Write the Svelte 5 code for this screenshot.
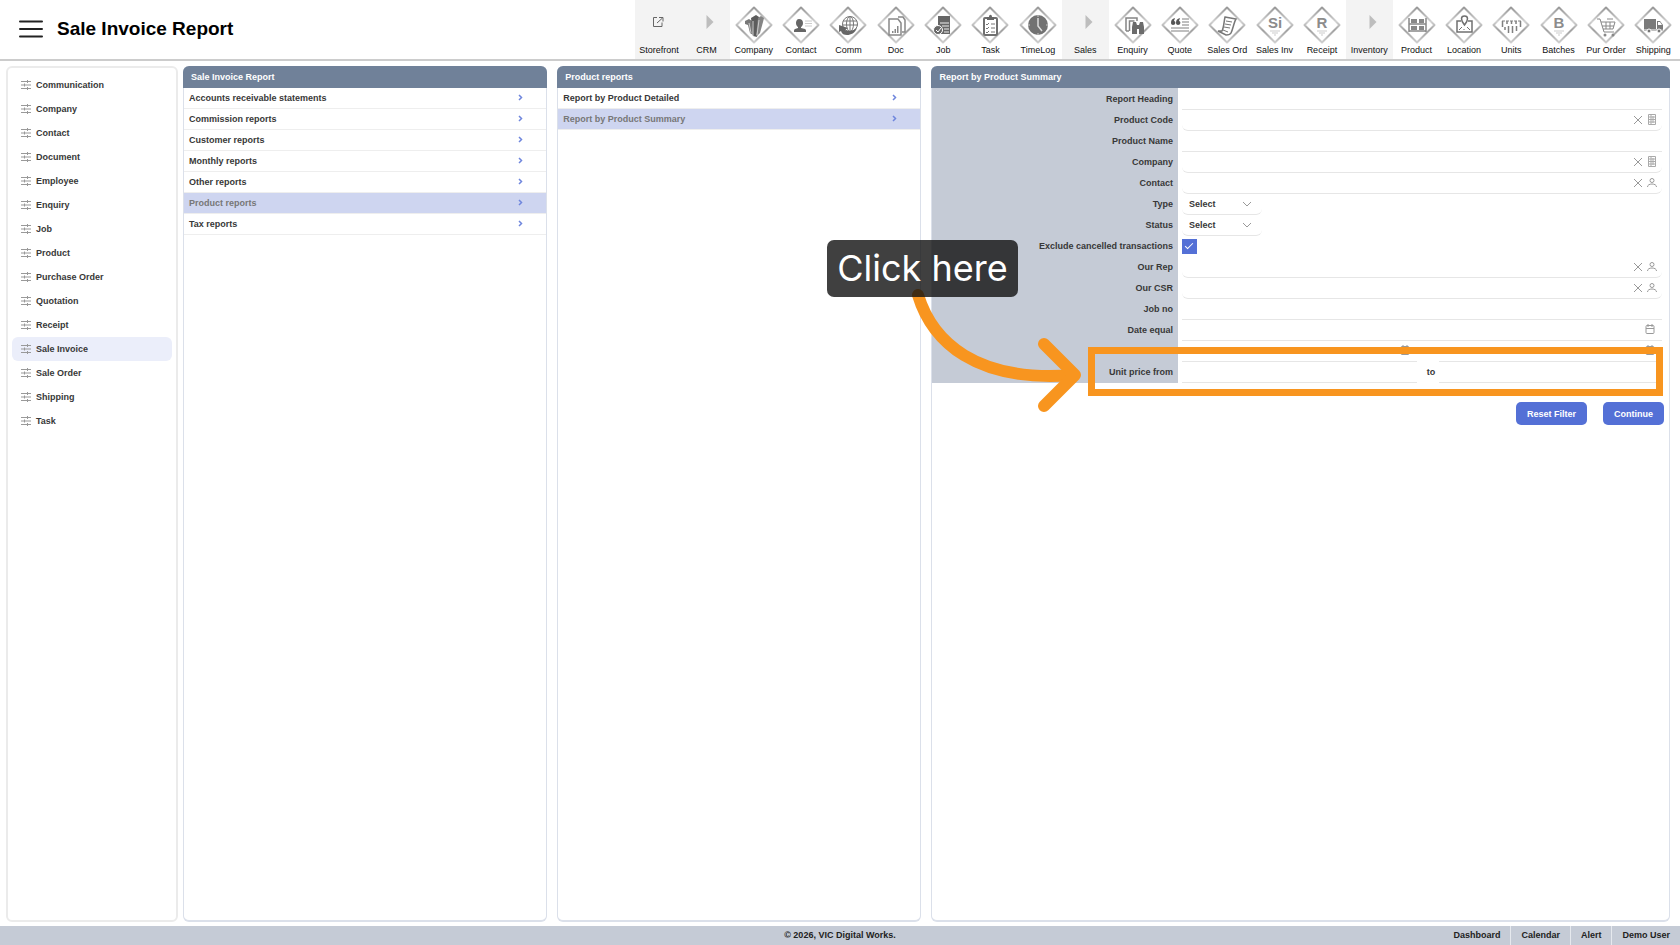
<script lang="ts">
  interface Tool {
    label: string;
    icon: string;
    section?: boolean;
  }

  interface Field {
    id: string;
    label: string;
    kind: 'text' | 'lookup' | 'select' | 'check' | 'date' | 'daterange' | 'range';
    icon?: 'building' | 'person';
  }

  const tools: Tool[] = [
    { label: 'Storefront', icon: 'external', section: true },
    { label: 'CRM', icon: 'arrow', section: true },
    { label: 'Company', icon: 'company' },
    { label: 'Contact', icon: 'contact' },
    { label: 'Comm', icon: 'comm' },
    { label: 'Doc', icon: 'doc' },
    { label: 'Job', icon: 'job' },
    { label: 'Task', icon: 'task' },
    { label: 'TimeLog', icon: 'timelog' },
    { label: 'Sales', icon: 'arrow', section: true },
    { label: 'Enquiry', icon: 'enquiry' },
    { label: 'Quote', icon: 'quote' },
    { label: 'Sales Ord', icon: 'order' },
    { label: 'Sales Inv', icon: 'Si' },
    { label: 'Receipt', icon: 'R' },
    { label: 'Inventory', icon: 'arrow', section: true },
    { label: 'Product', icon: 'product' },
    { label: 'Location', icon: 'location' },
    { label: 'Units', icon: 'units' },
    { label: 'Batches', icon: 'B' },
    { label: 'Pur Order', icon: 'cart' },
    { label: 'Shipping', icon: 'truck' }
  ];

  const modules = [
    'Communication', 'Company', 'Contact', 'Document', 'Employee', 'Enquiry', 'Job', 'Product',
    'Purchase Order', 'Quotation', 'Receipt', 'Sale Invoice', 'Sale Order', 'Shipping', 'Task'
  ];

  const groups = [
    'Accounts receivable statements', 'Commission reports', 'Customer reports',
    'Monthly reports', 'Other reports', 'Product reports', 'Tax reports'
  ];

  const reports = ['Report by Product Detailed', 'Report by Product Summary'];

  const fields: Field[] = [
    { id: 'heading', label: 'Report Heading', kind: 'text' },
    { id: 'code', label: 'Product Code', kind: 'lookup', icon: 'building' },
    { id: 'name', label: 'Product Name', kind: 'text' },
    { id: 'company', label: 'Company', kind: 'lookup', icon: 'building' },
    { id: 'contact', label: 'Contact', kind: 'lookup', icon: 'person' },
    { id: 'type', label: 'Type', kind: 'select' },
    { id: 'status', label: 'Status', kind: 'select' },
    { id: 'exclude', label: 'Exclude cancelled transactions', kind: 'check' },
    { id: 'rep', label: 'Our Rep', kind: 'lookup', icon: 'person' },
    { id: 'csr', label: 'Our CSR', kind: 'lookup', icon: 'person' },
    { id: 'job', label: 'Job no', kind: 'text' },
    { id: 'date', label: 'Date equal', kind: 'date' },
    { id: 'between', label: 'Date between from', kind: 'daterange' },
    { id: 'price', label: 'Unit price from', kind: 'range' }
  ];

  let activeModule = $state('Sale Invoice');
  let activeGroup = $state('Product reports');
  let activeReport = $state('Report by Product Summary');
  let excludeCancelled = $state(true);
</script>

{#snippet glyph(name: string)}
  {#if name === 'company'}
    <path d="M10 15l4-2 3 2 1 14-3-2-2-8-3-1z" fill="#777" />
    <path d="M16 12l5-3 3 2-2 20-4-1z" fill="#5c5c5c" />
    <path d="M23 12l3-2 3 2-1 4-3 11-4 4z" fill="#858585" />
    <path d="M18 15v15M14 17l2 10M24 14l-2 15" stroke="#ccc" fill="none" />
  {:else if name === 'contact'}
    <path d="M17 13c2.500 0 4 1.500 4 4 0 2-1 3.500-2 4v1l4 1c1 .5 1 1 1 3H12c0-2 0-2.500 1-3l3-1v-1c-1-.5-2-2-2-4s1-4 3-4z" fill="#666" />
    <path d="M23 15h7M23 17.500h7M23 20h7" stroke="#ccc" />
  {:else if name === 'comm'}
    <g fill="none" stroke="#777">
      <circle cx="21" cy="18" r="7.500" />
      <ellipse cx="21" cy="18" rx="3.500" ry="7.500" />
      <path d="M14 15h14M13 19h16M21 11v15" />
    </g>
    <path d="M10 19l9 3-3 2c4 2 8 1 12-2-2 5-6 7-10 7-3 0-5-1-6-4l-2 1z" fill="#666" />
  {:else if name === 'doc'}
    <g fill="none" stroke="#888" stroke-width="1.500">
      <path d="M12 13h9l3 4v12H12zM21 11h5l2 3v12h-3" />
    </g>
    <path d="M15 27v-2h1.500v2zM17.500 27v-4H19v4zM20 27v-7h1.500v7z" fill="#888" />
  {:else if name === 'job'}
    <path d="M14 10h12v18H14z" fill="#666" />
    <path d="M16 17h9M18 20h7M20 23h5M20 26h5" stroke="#eee" />
    <circle cx="14" cy="24" r="4.500" fill="#666" stroke="#fff" />
    <path d="M12 24l2 2 3-4" fill="none" stroke="#fff" />
  {:else if name === 'task'}
    <rect x="13" y="12" width="13" height="17" rx="1" fill="none" stroke="#707070" stroke-width="2" />
    <path d="M16 11h2c0-3 3-3 3 0h2v3h-7z" fill="#666" />
    <path d="M15 18l1 1 2-2M15 22l1 1 2-2M15 26l1 1 2-2M20 18h4M20 22h4M20 26h4" fill="none" stroke="#777" />
  {:else if name === 'timelog'}
    <circle cx="19" cy="19" r="10" fill="#727272" />
    <path d="M19 12v8l4 5" fill="none" stroke="#ddd" stroke-width="1.500" />
    <path d="M19 9v2M19 27v2M9 19h2M27 19h2" stroke="#ccc" />
  {:else if name === 'enquiry'}
    <path d="M12 25V12h11v3M12 25h3M15.500 25V15h5" fill="none" stroke="#858585" stroke-width="1.500" />
    <path d="M19 16h3l1 3h2l1-3h3l1 5v7h-5v-5h-2v5h-5v-7z" fill="#6c6c6c" />
  {:else if name === 'quote'}
    <path d="M10 17c0-3 1-4 4-5l-1 3c2 0 2 4-1 4-1 0-2-1-2-2zM15 17c0-3 1-4 4-5l-1 3c2 0 2 4-1 4-1 0-2-1-2-2z" fill="#555" />
    <path d="M21 13h7M21 16h7M21 19h7M10 22h18M10 25h18" stroke="#aaa" stroke-width="1.500" />
  {:else if name === 'order'}
    <path d="M17 11l11 2c-2 3-3 10-5 14-1 2-3 2-5 2l-8-4h4c2-4 2-10 3-14z" fill="#fff" stroke="#777" stroke-width="1.500" />
    <path d="M18 15l6 1M17 18l6 1M16 21l6 1M15 24l5 2" stroke="#777" />
  {:else if name === 'Si' || name === 'R' || name === 'B'}
    <text x="19" y="22" text-anchor="middle">{name}</text>
    <path d="M14 25h10M16 27h6M18 29h2" stroke="#ddd" stroke-width="1.500" />
  {:else if name === 'product'}
    <path d="M11 12v14M28 12v14M11 18h17M11 25h17" stroke="#888" stroke-width="1.500" />
    <path d="M13 13h6v4h-6zM21 13h5v4h-5zM13 20h6v4h-6zM21 20h5v4h-5z" fill="#888" />
  {:else if name === 'location'}
    <path d="M16 15h-4v11h15V15h-4" fill="none" stroke="#707070" stroke-width="1.500" />
    <path d="M19.500 10c4 0 4 4 0 9-4-5-4-9 0-9z" fill="#fff" stroke="#707070" stroke-width="1.500" />
    <path d="M14 24l3-3M25 24l-3-3M19 23v1" stroke="#707070" />
  {:else if name === 'units'}
    <path d="M10 15h19" stroke="#aaa" stroke-width="1.500" stroke-dasharray="3 1" />
    <path d="M10.500 15v6M15 15v3M19.500 15v3M24 15v3M28.500 15v6M13 21v3M16.500 20v7M20.500 20v7M24.500 20v5" stroke="#808080" stroke-width="1.500" />
  {:else if name === 'cart'}
    <path d="M10 13h3l4 13h10M14 16h14l-2 7H16M15 20h12M19 16v7M23 16v7" fill="none" stroke="#888" />
    <path d="M20 13h6" stroke="#888" />
    <circle cx="18" cy="29" r="1.500" fill="#888" />
    <circle cx="26" cy="29" r="1.500" fill="#888" />
  {:else if name === 'truck'}
    <path d="M10 13h12v10H10zM23 15h3l3 4v5h-6z" fill="#7a7a7a" />
    <path d="M24 16h2l2 3h-4z" fill="#fff" />
    <path d="M10 24h19" stroke="#aaa" stroke-width="1.500" />
    <circle cx="15" cy="25" r="2" fill="#777" stroke="#fff" />
    <circle cx="25" cy="25" r="2" fill="#777" stroke="#fff" />
  {/if}
{/snippet}

{#snippet calendar()}
  <svg width="10" height="11" viewBox="0 0 10 11" fill="none" stroke="#999">
    <rect x="1" y="1.500" width="8" height="8" rx="1" />
    <path d="M1 4.500h8M3 0v3M7 0v3" />
  </svg>
{/snippet}

{#snippet list(title: string, items: string[], active: string, pick: (item: string) => void)}
  <section class="panel">
    <h2>{title}</h2>
    <ul class="rows">
      {#each items as item}
        <li>
          <button type="button" class="row" class:active={item === active} onclick={() => pick(item)}>
            <span>{item}</span>
            <svg width="5" height="9" viewBox="0 0 5 9" fill="none" stroke="#6f86dd" stroke-width="1.500">
              <path d="M1 1l2.500 2.500L1 6" />
            </svg>
          </button>
        </li>
      {/each}
    </ul>
  </section>
{/snippet}

<div class="page">
  <header>
    <button type="button" class="menu" aria-label="Menu">
      <svg width="26" height="20" viewBox="0 0 26 20" stroke="#222" stroke-width="2" stroke-linecap="round">
        <path d="M2 2.500h22M2 10h22M2 17.500h22" />
      </svg>
    </button>
    <h1>Sale Invoice Report</h1>
    <nav class="toolbar">
      {#each tools as tool}
        <a href="#{tool.label}" class="tool" class:section={tool.section}>
          {#if tool.icon === 'external'}
            <svg width="38" height="38" viewBox="0 0 38 38" fill="none" stroke="#666">
              <path d="M17 11.500h-3.500v9h8.500v-4M19 11.500h4v4M22.500 12L17 17" />
            </svg>
          {:else if tool.icon === 'arrow'}
            <svg width="38" height="38" viewBox="0 0 38 38">
              <path d="M19.500 9l7 7-7 7z" fill="#bdbdbd" />
            </svg>
          {:else}
            <svg width="38" height="38" viewBox="0 0 38 38">
              <defs>
                <linearGradient id="edge-{tool.icon}" x1="0" y1="0" x2="0" y2="1">
                  <stop offset="0" stop-color="#999" />
                  <stop offset="0.4" stop-color="#d2d2d2" />
                  <stop offset="0.65" stop-color="#a2a2a2" />
                  <stop offset="1" stop-color="#cfcfcf" />
                </linearGradient>
              </defs>
              <path d="M19 1.500L36.500 19 19 36.500 1.500 19z" fill="#fff" stroke="url(#edge-{tool.icon})" stroke-width="2" stroke-linejoin="round" />
              {@render glyph(tool.icon)}
            </svg>
          {/if}
          <span>{tool.label}</span>
        </a>
      {/each}
    </nav>
  </header>

  <main>
    <nav class="sidebar">
      {#each modules as name}
        <button type="button" class:active={name === activeModule} onclick={() => (activeModule = name)}>
          <svg width="10" height="10" viewBox="0 0 10 10" stroke="#999">
            <path d="M0 1.500h10M0 5h10M0 8.500h10" />
            <path d="M6.500 0v3M3.500 3.500v3M6.500 7v3" />
          </svg>
          {name}
        </button>
      {/each}
    </nav>

    <div class="panels">
      {@render list('Sale Invoice Report', groups, activeGroup, (item) => (activeGroup = item))}
      {@render list('Product reports', reports, activeReport, (item) => (activeReport = item))}

      <section class="panel">
        <h2>{activeReport}</h2>
        <form onsubmit={(e) => e.preventDefault()}>
          {#each fields as field}
            <div class="field">
              <label for={field.id}>{field.label}</label>
              <div class="control">
                {#if field.kind === 'select'}
                  <div class="box select">
                    <select id={field.id}>
                      <option>Select</option>
                    </select>
                    <svg width="10" height="6" viewBox="0 0 10 6" fill="none" stroke="#999">
                      <path d="M1 1l4 4 4-4" />
                    </svg>
                  </div>
                {:else if field.kind === 'check'}
                  <input id={field.id} type="checkbox" bind:checked={excludeCancelled} />
                {:else if field.kind === 'lookup'}
                  <div class="box lookup">
                    <input id={field.id} type="text" />
                    <button type="button" aria-label="Clear {field.label}">
                      <svg width="10" height="10" viewBox="0 0 10 10" stroke="#999">
                        <path d="M1 1l8 8M9 1L1 9" />
                      </svg>
                    </button>
                    <button type="button" aria-label="Find {field.label}">
                      {#if field.icon === 'building'}
                        <svg width="10" height="12" viewBox="0 0 10 12" fill="none" stroke="#aaa">
                          <path d="M1.500 .5h7v10h-7zM4 .5v10M6 2v7M1.500 3h7M1.500 5.500h7M1.500 8h7" />
                        </svg>
                      {:else}
                        <svg width="10" height="12" viewBox="0 0 10 12" fill="none" stroke="#999">
                          <circle cx="5" cy="3.500" r="2" />
                          <path d="M.5 10c0-2 2-3 4.500-3s4.500 1 4.500 3" />
                        </svg>
                      {/if}
                    </button>
                  </div>
                {:else if field.kind === 'range' || field.kind === 'daterange'}
                  <div class="box from">
                    <input id={field.id} type="text" />
                    {#if field.kind === 'daterange'}{@render calendar()}{/if}
                  </div>
                  <label class="to" for="{field.id}-to">to</label>
                  <div class="box until">
                    <input id="{field.id}-to" type="text" />
                    {#if field.kind === 'daterange'}{@render calendar()}{/if}
                  </div>
                {:else}
                  <div class="box">
                    <input id={field.id} type="text" />
                    {#if field.kind === 'date'}{@render calendar()}{/if}
                  </div>
                {/if}
              </div>
            </div>
          {/each}

          <div class="actions">
            <button type="reset">Reset Filter</button>
            <button type="submit">Continue</button>
          </div>

          <div class="highlight"></div>
          <svg class="pointer" width="180" height="130" viewBox="0 0 180 130" fill="none" stroke="#f8951f" stroke-width="12" stroke-linecap="round" stroke-linejoin="round">
            <path d="M10 10C24 56 67 98 166 90" />
            <path d="M136 59l31 31-31 31" />
          </svg>
          <div class="hint">Click here</div>
        </form>
      </section>
    </div>
  </main>

  <footer>
    <span class="copy">© 2026, VIC Digital Works.</span>
    <nav>
      <a href="#dashboard">Dashboard</a>
      <a href="#calendar">Calendar</a>
      <a href="#alert">Alert</a>
      <a href="#user">Demo User</a>
    </nav>
  </footer>
</div>

<style>
  :global(body) {
    margin: 0;
    background: #fff;
  }

  .page {
    display: flex;
    flex-direction: column;
    min-height: 100vh;
    font-family: 'Liberation Sans', Arial, sans-serif;
    font-size: 9px;
    font-weight: 700;
    line-height: 12px;
    color: #383838;
  }

  .page :is(button, input, select) {
    font: inherit;
    color: inherit;
    box-sizing: border-box;
  }

  a {
    color: inherit;
    text-decoration: none;
  }

  svg {
    display: block;
    flex: none;
  }

  header {
    display: flex;
    align-items: center;
    height: 59px;
    border-bottom: 2px solid #ccc;
  }

  .menu {
    padding: 0;
    margin: 0 13px 2px 18px;
    background: none;
    border: none;
    cursor: pointer;
  }

  h1 {
    margin: 0 0 2px;
    font-size: 19px;
    line-height: 24px;
    color: #000;
  }

  .toolbar {
    display: flex;
    flex: 0 0 62%;
    align-self: stretch;
    margin: 0 3px 0 auto;
  }

  .tool {
    display: flex;
    flex: 1 1 0;
    flex-direction: column;
    align-items: center;
    min-width: 0;
    padding-top: 6px;
    font-weight: 400;
    color: #111;
    white-space: nowrap;
  }

  .tool.section {
    background: #f3f3f3;
  }

  .tool text {
    font-size: 15px;
    font-weight: 700;
    fill: #8c8c8c;
  }

  main {
    display: flex;
    flex: 1;
    gap: 5px;
    padding: 5px 10px 4px 6px;
  }

  .sidebar {
    flex: 0 0 172px;
    box-sizing: border-box;
    padding: 5px 4px;
    border: 2px solid #ebebeb;
    border-radius: 6px;
  }

  .sidebar button {
    display: flex;
    align-items: center;
    gap: 5px;
    width: 100%;
    height: 24px;
    padding: 0 9px;
    background: none;
    border: none;
    border-radius: 6px;
    cursor: pointer;
  }

  .sidebar button.active {
    background: #ebeefa;
  }

  .panels {
    display: grid;
    flex: 1;
    grid-template-columns: 364fr 364fr 738fr;
    gap: 10px;
  }

  .panel {
    box-sizing: border-box;
    min-width: 0;
    border: 1px solid #dbe0ea;
    border-bottom-width: 2px;
    border-top: none;
    border-radius: 6px;
  }

  h2 {
    margin: 0 -1px;
    padding: 0 8px;
    font-size: 9px;
    line-height: 22px;
    color: #fff;
    background: #708199;
    border-radius: 6px 6px 0 0;
  }

  .rows {
    margin: 0;
    padding: 0;
    list-style: none;
  }

  .row {
    display: flex;
    align-items: center;
    justify-content: space-between;
    width: 100%;
    height: 21px;
    padding: 0 23px 0 5px;
    background: none;
    border: none;
    border-bottom: 1px solid #eee;
    cursor: pointer;
  }

  .row.active {
    color: #777;
    background: #ced5f0;
  }

  form {
    position: relative;
  }

  .field {
    display: grid;
    grid-template-columns: 1fr 2fr;
    height: 21px;
  }

  .field > label {
    padding-right: 5px;
    line-height: 22px;
    text-align: right;
    background: #c5cbd6;
  }

  .control {
    display: flex;
    align-items: center;
    padding: 0 7px 0 4px;
  }

  .box {
    display: flex;
    flex: 1;
    align-items: center;
    box-sizing: border-box;
    height: 21px;
    padding-right: 7px;
    border-bottom: 1px solid #e6e6e6;
  }

  .box.from {
    flex: 236;
  }

  .box.until {
    flex: 223;
  }

  .box input,
  .box select {
    flex: 1;
    min-width: 0;
    height: 18px;
    padding: 0 7px;
    background: none;
    border: none;
    outline: none;
    appearance: none;
  }

  .box.lookup {
    gap: 4px;
    padding-right: 5px;
    border-radius: 0 0 6px 6px;
  }

  .box.select {
    flex: 0 0 80px;
    padding-right: 10px;
    border-radius: 0 0 6px 6px;
  }

  .box button {
    padding: 0;
    background: none;
    border: none;
    cursor: pointer;
  }

  .to {
    box-sizing: border-box;
    width: 22px;
    padding-right: 4px;
    text-align: right;
  }

  input[type='checkbox'] {
    display: grid;
    place-items: center;
    width: 15px;
    height: 15px;
    margin: 0;
    appearance: none;
    background: #fff;
    border: 1px solid #5470d6;
  }

  input[type='checkbox']:checked {
    background: #5470d6;
  }

  input[type='checkbox']:checked::after {
    content: '';
    width: 7px;
    height: 3px;
    margin-bottom: 3px;
    border: solid #fff;
    border-width: 0 0 1px 1px;
    transform: rotate(-45deg);
  }

  .actions {
    display: flex;
    justify-content: flex-end;
    gap: 16px;
    padding: 20px 5px 0;
  }

  .actions button {
    height: 23px;
    padding: 0 11px;
    color: #fff;
    background: #5470d6;
    border: none;
    border-radius: 5px;
    cursor: pointer;
  }

  .highlight {
    position: absolute;
    top: 259px;
    right: 6px;
    width: 575px;
    height: 49px;
    box-sizing: border-box;
    border: 7px solid #f8951f;
    pointer-events: none;
  }

  .pointer {
    position: absolute;
    top: 197px;
    right: 581px;
    pointer-events: none;
  }

  .hint {
    position: absolute;
    top: 152px;
    right: 651px;
    box-sizing: border-box;
    width: 191px;
    font-family: Inter, sans-serif;
    font-size: 36px;
    font-weight: 400;
    line-height: 57px;
    text-align: center;
    color: #fff;
    background: rgba(16, 16, 16, 0.8);
    border-radius: 7px;
    pointer-events: none;
  }

  footer {
    display: grid;
    grid-template-columns: 1fr auto 1fr;
    color: #222;
    background: #c5cbd6;
    line-height: 19px;
  }

  .copy {
    grid-column: 2;
  }

  footer nav {
    display: flex;
    justify-content: flex-end;
  }

  footer nav a {
    padding: 0 10px;
  }

  footer nav a + a {
    border-left: 1px solid #e6e9ee;
  }
</style>
